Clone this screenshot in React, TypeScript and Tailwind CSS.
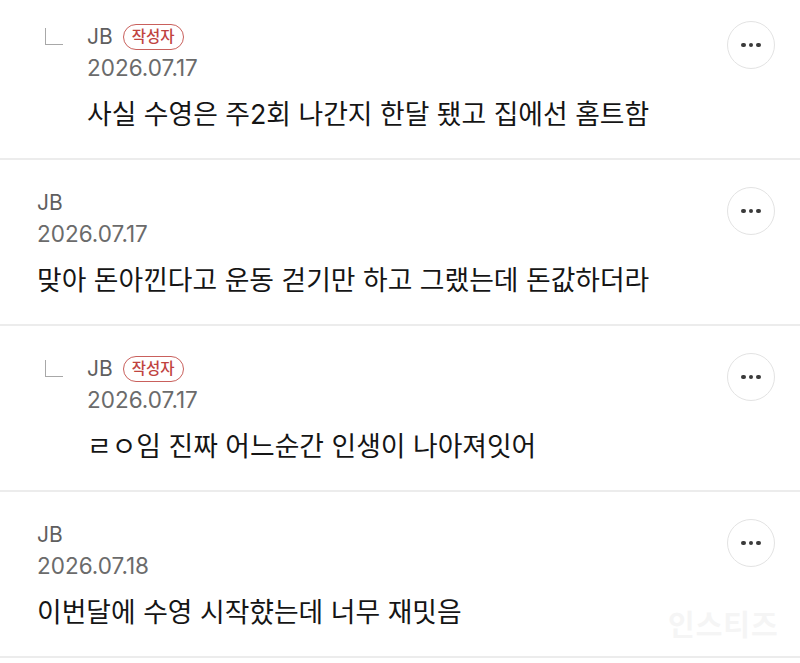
import React from "react"

type Comment = {
  name: string
  date: string
  text: string
  reply?: boolean
  author?: boolean
}

const comments: Comment[] = [
  { name: "JB", date: "2026.07.17", text: "사실 수영은 주2회 나간지 한달 됐고 집에선 홈트함", reply: true, author: true },
  { name: "JB", date: "2026.07.17", text: "맞아 돈아낀다고 운동 걷기만 하고 그랬는데 돈값하더라" },
  { name: "JB", date: "2026.07.17", text: "ㄹㅇ임 진짜 어느순간 인생이 나아져잇어", reply: true, author: true },
  { name: "JB", date: "2026.07.18", text: "이번달에 수영 시작햤는데 너무 재밋음" },
]

const font = "font-['Inter','Noto_Sans_CJK_KR',sans-serif]"

function MoreButton() {
  return (
    <button className="flex size-[48px] shrink-0 items-center justify-center gap-[3px] rounded-full border border-[#e3e3e3] bg-white">
      <span className="size-[4.5px] rounded-full bg-[#3a3a3a]" />
      <span className="size-[4.5px] rounded-full bg-[#3a3a3a]" />
      <span className="size-[4.5px] rounded-full bg-[#3a3a3a]" />
    </button>
  )
}

function CommentRow({ c, first }: { c: Comment; first: boolean }) {
  return (
    <div
      className={`flex items-start border-b-2 border-[#ececec] pl-[37px] pr-[25px] ${
        first ? "pt-[22px]" : "pt-[28px]"
      } pb-[24px]`}
    >
      {c.reply && (
        <div className="mr-[24px] ml-[8px] mt-[6px] h-[17px] w-[18px] shrink-0 border-b-[1.5px] border-l-[1.5px] border-[#a8a8a8]" />
      )}
      <div className="flex min-w-0 flex-1 flex-col">
        <div className="flex h-[30px] items-center gap-[10px]">
          <span className="text-[21px] text-[#5f5f5f]">{c.name}</span>
          {c.author && (
            <span className="flex h-[26px] items-center rounded-full border-[1.5px] border-[#c9605c] px-[8px] text-[15.5px] font-medium text-[#c0433f]">
              작성자
            </span>
          )}
        </div>
        <div className="flex h-[32px] items-center text-[22.5px] text-[#6b6b6b]">{c.date}</div>
        <div className="mt-[10px] flex h-[40px] items-center text-[26.8px] text-[#151515]">{c.text}</div>
      </div>
      <div className="mt-[-1px]">
        <MoreButton />
      </div>
    </div>
  )
}

export default function App() {
  return (
    <div className={`relative h-[663px] w-[800px] overflow-hidden bg-white ${font}`}>
      {comments.map((c, i) => (
        <CommentRow key={i} c={c} first={i === 0} />
      ))}
      {/* faint watermark */}
      <div className="absolute left-[668px] top-[604px] text-[29px] font-bold tracking-[1px] text-[#f5f5f5]">
        인스티즈
      </div>
    </div>
  )
}
